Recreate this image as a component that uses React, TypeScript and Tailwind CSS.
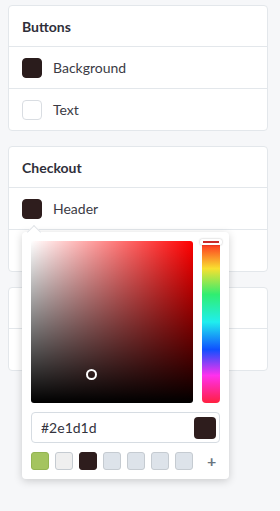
import React from "react";

function Row({ color, label, h, last }: { color: string; label: string; h: string; last?: boolean }) {
  return (
    <div className={`flex ${h} items-center gap-[11px] px-[13px] ${last ? "" : "border-b border-[#e3e7eb]"}`}>
      <div
        className="h-[20px] w-[20px] rounded-[4px] border"
        style={{ backgroundColor: color, borderColor: color === "#ffffff" ? "#d9dde2" : color }}
      />
      <span className="text-[14px] text-[#3b3b45]">{label}</span>
    </div>
  );
}

function Card({ title, children }: { title?: string; children: React.ReactNode }) {
  return (
    <div className="w-[260px] overflow-hidden rounded-[4px] border border-[#e3e7eb] bg-white">
      {title && (
        <div className="flex h-[41px] items-center border-b border-[#e3e7eb] px-[13px]">
          <span className="text-[14px] font-bold text-[#2f2f3a]">{title}</span>
        </div>
      )}
      {children}
    </div>
  );
}

export default function App() {
  const swatches = ["#a4c45f", "#efefef", "#2e1d1d", "#dde3ea", "#dde3ea", "#dde3ea", "#dde3ea"];
  return (
    <div
      className="relative min-h-[511px] w-[280px] bg-[#f6f7f9] pl-[8px] pt-[5px]"
      style={{ fontFamily: "Lato, 'Open Sans', sans-serif" }}
    >
      <div className="flex flex-col gap-[15px]">
        <Card title="Buttons">
          <Row color="#2a1c1c" label="Background" h="h-[42px]" />
          <Row color="#ffffff" label="Text" h="h-[41px]" last />
        </Card>
        <Card title="Checkout">
          <Row color="#2e1d1d" label="Header" h="h-[42px]" />
          <Row color="#ffffff" label="Text" h="h-[41px]" last />
        </Card>
        <Card>
          <Row color="#ffffff" label="Footer" h="h-[41px]" />
          <Row color="#ffffff" label="Links" h="h-[41px]" last />
        </Card>
      </div>

      {/* Color picker popover */}
      <div className="absolute left-[22px] top-[232px] h-[247px] w-[207px] rounded-[4px] bg-white shadow-[0_2px_8px_rgba(0,0,0,0.18)]">
        <div className="absolute left-[7px] top-[-5px] h-[10px] w-[10px] rotate-45 border-l border-t border-[#e1e4e8] bg-white" />
        <div className="relative flex gap-[9px] px-[9px] pt-[9px]">
          <div
            className="relative h-[162px] w-[162px] rounded-[3px]"
            style={{
              background:
                "linear-gradient(to top, #000, rgba(0,0,0,0)), linear-gradient(to right, #fff, rgba(255,255,255,0)), #ff0000",
            }}
          >
            <div className="absolute left-[55px] top-[128px] h-[11px] w-[11px] rounded-full border-2 border-white" />
          </div>
          <div className="relative h-[162px] w-[18px]">
            <div
              className="h-full w-full rounded-[4px]"
              style={{
                background:
                  "linear-gradient(to bottom, #ff2020 0%, #f8e030 17%, #30ee70 33%, #20eeee 50%, #1050ff 67%, #ff30ee 83%, #ff2040 100%)",
              }}
            />
            <div className="absolute left-[-2px] top-[-2px] flex h-[6px] w-[22px] items-center justify-center rounded-[2px] bg-white shadow-[0_0_2px_rgba(0,0,0,0.3)]">
              <div className="h-[2px] w-[16px] bg-[#c92a2a]" />
            </div>
          </div>
        </div>
        <div className="mx-[9px] mt-[9px] flex h-[31px] items-center justify-between rounded-[4px] border border-[#d6dce2] pl-[9px] pr-[3px]">
          <span className="text-[14px] text-[#33333d]">#2e1d1d</span>
          <div className="h-[22px] w-[22px] rounded-[4px] bg-[#2e1d1d]" />
        </div>
        <div className="mx-[9px] mt-[9px] flex items-center gap-[6px]">
          {swatches.map((c, i) => (
            <div
              key={i}
              className="h-[18px] w-[18px] rounded-[3px] border"
              style={{
                backgroundColor: c,
                borderColor: c === "#2e1d1d" ? "#2e1d1d" : c === "#a4c45f" ? "#93b452" : "#c5cbd1",
              }}
            />
          ))}
          <span className="ml-[8px] text-[16px] font-bold leading-none text-[#6b7580]">+</span>
        </div>
      </div>
    </div>
  );
}
